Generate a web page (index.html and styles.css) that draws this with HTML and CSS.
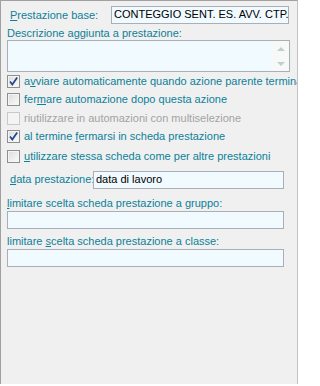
FILE: index.html
```html
<!DOCTYPE html>
<html>
<head>
<meta charset="utf-8">
<link rel="stylesheet" href="styles.css">
</head>
<body>
<div class="panel">
  <div class="row-base">
    <span class="lbl lbl-base"><u>P</u>restazione base:</span>
    <div class="field field-base">CONTEGGIO SENT. ES. AVV. CTP.</div>
  </div>
  <div class="lbl lbl-block">Descrizione aggiunta a prestazione:</div>
  <div class="field area">
    <div class="scroll">
      <span class="arr up"></span>
      <span class="arr down"></span>
    </div>
  </div>
  <div class="checks">
    <div class="chk">
      <span class="box"><svg width="11" height="11" viewBox="0 0 11 11"><path d="M2 5.5 L4.3 8.6 L9.2 1.5" fill="none" stroke="#25448f" stroke-width="1.7"/></svg></span>
      <span class="lbl">a<u>v</u>viare automaticamente quando azione parente termina</span>
    </div>
    <div class="chk">
      <span class="box"></span>
      <span class="lbl">fer<u>m</u>are automazione dopo questa azione</span>
    </div>
    <div class="chk disabled">
      <span class="box"></span>
      <span class="lbl">riutilizzare in automazioni con multiselezione</span>
    </div>
    <div class="chk">
      <span class="box"><svg width="11" height="11" viewBox="0 0 11 11"><path d="M2 5.5 L4.3 8.6 L9.2 1.5" fill="none" stroke="#25448f" stroke-width="1.7"/></svg></span>
      <span class="lbl">al termine <u>f</u>ermarsi in scheda prestazione</span>
    </div>
    <div class="chk chk-last">
      <span class="box"></span>
      <span class="lbl"><u>u</u>tilizzare stessa scheda come per altre prestazioni</span>
    </div>
  </div>
  <div class="row-data">
    <span class="lbl lbl-data"><u>d</u>ata prestazione:</span>
    <div class="field field-data">data di lavoro</div>
  </div>
  <div class="lbl lbl-block lbl-lim"><u>l</u>imitare scelta scheda prestazione a gruppo:</div>
  <div class="field field-lim"></div>
  <div class="lbl lbl-block lbl-lim2">limitare <u>s</u>celta scheda prestazione a classe:</div>
  <div class="field field-lim"></div>
</div>
</body>
</html>
```
FILE: styles.css
```css
html, body {
  margin: 0;
  padding: 0;
  background: #ffffff;
}
body {
  width: 300px;
  height: 386px;
  overflow: hidden;
  font-family: "Liberation Sans", Arial, sans-serif;
  font-size: 11px;
  line-height: 13px;
}
.panel {
  box-sizing: border-box;
  width: 298px;
  height: 384px;
  background: #f0f0f0;
  border-top: 1px solid #a0a0a0;
  border-left: 1px solid #a0a0a0;
  border-right: 1px solid #c4c4c4;
  padding: 5px 0 0 6px;
  overflow: hidden;
}
.lbl {
  color: #0c8199;
  white-space: nowrap;
}
u {
  text-decoration: underline;
  text-underline-offset: 1px;
}
.field {
  box-sizing: border-box;
  background: #f0faff;
  border: 1px solid #a9afb6;
  color: #000;
  height: 18px;
  padding: 1px 2px;
  white-space: nowrap;
  overflow: hidden;
}
.row-base {
  display: flex;
  align-items: center;
  height: 18px;
}
.lbl-base {
  margin-left: 3px;
  width: 101px;
}
.field-base {
  width: 178px;
}
.lbl-block {
  display: block;
  margin-top: 3px;
}
.area {
  position: relative;
  width: 283px;
  height: 32px;
  padding: 0;
}
.scroll {
  position: absolute;
  right: 0;
  top: 0;
  bottom: 0;
  width: 17px;
  background: #f7f8f8;
  display: flex;
  flex-direction: column;
  align-items: center;
  justify-content: space-between;
  padding: 6px 0 5px;
  box-sizing: border-box;
}
.arr {
  width: 0;
  height: 0;
  border-left: 4px solid transparent;
  border-right: 4px solid transparent;
}
.arr.up {
  border-bottom: 4px solid #bfcfc7;
}
.arr.down {
  border-top: 4px solid #bfcfc7;
}
.checks {
  overflow: hidden;
  width: 291px;
}
.chk {
  display: flex;
  align-items: center;
  height: 18.5px;
}
.chk-last {
  margin-top: 1px;
}
.box {
  box-sizing: border-box;
  flex: none;
  width: 13px;
  height: 13px;
  border: 1px solid #8e8f8f;
  background: linear-gradient(135deg, #d8dcd8 0%, #eef0ee 60%, #fbfbfb 100%);
  box-shadow: inset 0 0 0 1px #f4f4f4;
  margin-right: 4px;
  display: flex;
  align-items: center;
  justify-content: center;
}
.box svg {
  display: block;
}
.disabled .lbl {
  color: #a3a3a3;
}
.disabled .box {
  border-color: #c9c9c9;
  background: #f4f4f4;
  box-shadow: none;
}
.row-data {
  display: flex;
  align-items: center;
  margin-top: 5px;
  height: 18px;
}
.lbl-data {
  margin-left: 3px;
  width: 83px;
}
.field-data {
  width: 191px;
  padding-left: 2px;
}
.lbl-lim {
  margin-top: 8px;
}
.field-lim {
  width: 277px;
  height: 18px;
  margin-top: 1px;
}
.lbl-lim2 {
  margin-top: 6px;
}
```
